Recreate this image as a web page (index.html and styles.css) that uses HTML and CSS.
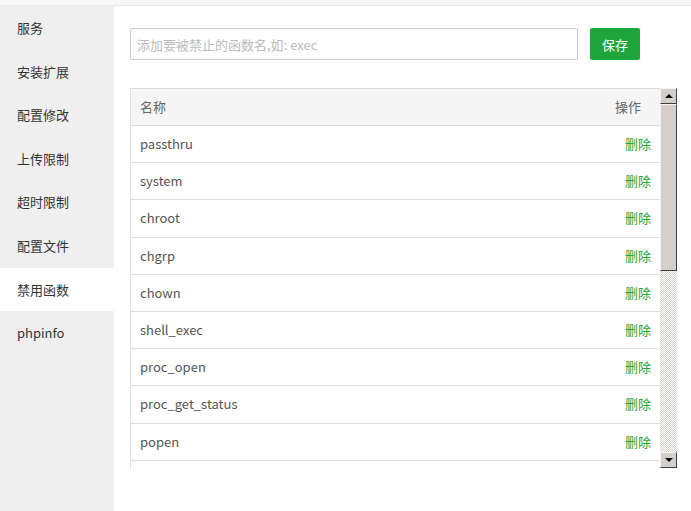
FILE: index.html
```html
<!DOCTYPE html>
<html lang="zh-CN">
<head>
    <meta charset="UTF-8">
    <title>禁用函数</title>
    <link rel="stylesheet" href="styles.css">
</head>
<body>
<div class="top-strip"></div>
<div class="layout">
    <ul class="side-menu">
        <li>服务</li>
        <li>安装扩展</li>
        <li>配置修改</li>
        <li>上传限制</li>
        <li>超时限制</li>
        <li>配置文件</li>
        <li class="active">禁用函数</li>
        <li>phpinfo</li>
    </ul>
    <div class="main">
        <div class="add-bar">
            <input class="func-input" type="text" placeholder="添加要被禁止的函数名,如: exec">
            <button class="btn-save">保存</button>
        </div>
        <div class="table-box">
            <div class="table-scroll">
                <table class="func-table">
                    <thead>
                    <tr><th>名称</th><th class="op">操作</th></tr>
                    </thead>
                    <tbody>
                    <tr><td>passthru</td><td class="op"><a>删除</a></td></tr>
                    <tr><td>system</td><td class="op"><a>删除</a></td></tr>
                    <tr><td>chroot</td><td class="op"><a>删除</a></td></tr>
                    <tr><td>chgrp</td><td class="op"><a>删除</a></td></tr>
                    <tr><td>chown</td><td class="op"><a>删除</a></td></tr>
                    <tr><td>shell_exec</td><td class="op"><a>删除</a></td></tr>
                    <tr><td>proc_open</td><td class="op"><a>删除</a></td></tr>
                    <tr><td>proc_get_status</td><td class="op"><a>删除</a></td></tr>
                    <tr><td>popen</td><td class="op"><a>删除</a></td></tr>
                    </tbody>
                </table>
            </div>
            <div class="scrollbar">
                <div class="sb-btn"><span class="arrow-up"></span></div>
                <div class="sb-track"><div class="sb-thumb"></div></div>
                <div class="sb-btn"><span class="arrow-down"></span></div>
            </div>
        </div>
    </div>
</div>
</body>
</html>
```

FILE: styles.css
```css
* {
    box-sizing: border-box;
}

body {
    margin: 0;
    width: 691px;
    height: 511px;
    overflow: hidden;
    background: #fff;
    font-family: "Noto Sans CJK SC", "Noto Sans", sans-serif;
    font-size: 13px;
    color: #555;
}

.top-strip {
    height: 6px;
    background: #f7f7f7;
    border-bottom: 1px solid #eaeaea;
}

.layout {
    display: flex;
    height: 505px;
}

.side-menu {
    width: 115px;
    margin: 0;
    padding: 0;
    list-style: none;
    background: #efefef;
}

.side-menu li {
    height: 43.6px;
    line-height: 43.6px;
    padding-left: 17px;
    color: #333;
}

.side-menu li.active {
    background: #fff;
}

.main {
    flex: 1;
    padding: 22px 14px 0 16px;
}

.add-bar {
    display: flex;
    gap: 12px;
    height: 32px;
}

.func-input {
    width: 448px;
    height: 32px;
    border: 1px solid #ccc;
    border-radius: 2px;
    padding: 0 6px;
    font-family: inherit;
    font-size: 13px;
    color: #555;
    outline: none;
}

.func-input::placeholder {
    color: #bbb;
}

.btn-save {
    width: 50px;
    height: 32px;
    border: none;
    border-radius: 2px;
    background: #20a53a;
    color: #fff;
    font-family: inherit;
    font-size: 13px;
    padding: 0;
}

.table-box {
    display: flex;
    margin-top: 28px;
    height: 380px;
    width: 547px;
}

.table-scroll {
    flex: 1;
    overflow: hidden;
    border-left: 1px solid #ddd;
}

.func-table {
    width: 100%;
    border-collapse: collapse;
}

.func-table th,
.func-table td {
    height: 37.2px;
    padding: 0 9px 1px;
    border-bottom: 1px solid #ddd;
    text-align: left;
    font-weight: normal;
    white-space: nowrap;
}

.func-table th {
    height: 37px;
    background: #f5f5f5;
    border-top: 1px solid #ddd;
    color: #666;
}

.func-table th.op {
    text-align: right;
    padding-right: 19px;
}

.func-table td.op {
    text-align: right;
}

.func-table a {
    color: #20a53a;
    cursor: pointer;
}

.scrollbar {
    width: 17px;
    display: flex;
    flex-direction: column;
    background: #fff;
}

.sb-btn {
    height: 16px;
    background: #d4d0c8;
    border-top: 1px solid #f4f3ef;
    border-left: 1px solid #f4f3ef;
    border-right: 1px solid #404040;
    border-bottom: 1px solid #404040;
    display: flex;
    align-items: center;
    justify-content: center;
}

.arrow-up {
    width: 0;
    height: 0;
    border-left: 4px solid transparent;
    border-right: 4px solid transparent;
    border-bottom: 4px solid #000;
}

.arrow-down {
    width: 0;
    height: 0;
    border-left: 4px solid transparent;
    border-right: 4px solid transparent;
    border-top: 4px solid #000;
}

.sb-track {
    flex: 1;
    background-color: #eceae6;
    background-image: repeating-conic-gradient(#d4d0c8 0 25%, #fff 0 50%);
    background-size: 2px 2px;
}

.sb-thumb {
    height: 167px;
    background: #d4d0c8;
    border-top: 1px solid #f4f3ef;
    border-left: 1px solid #f4f3ef;
    border-right: 1px solid #404040;
    border-bottom: 1px solid #404040;
}
```
